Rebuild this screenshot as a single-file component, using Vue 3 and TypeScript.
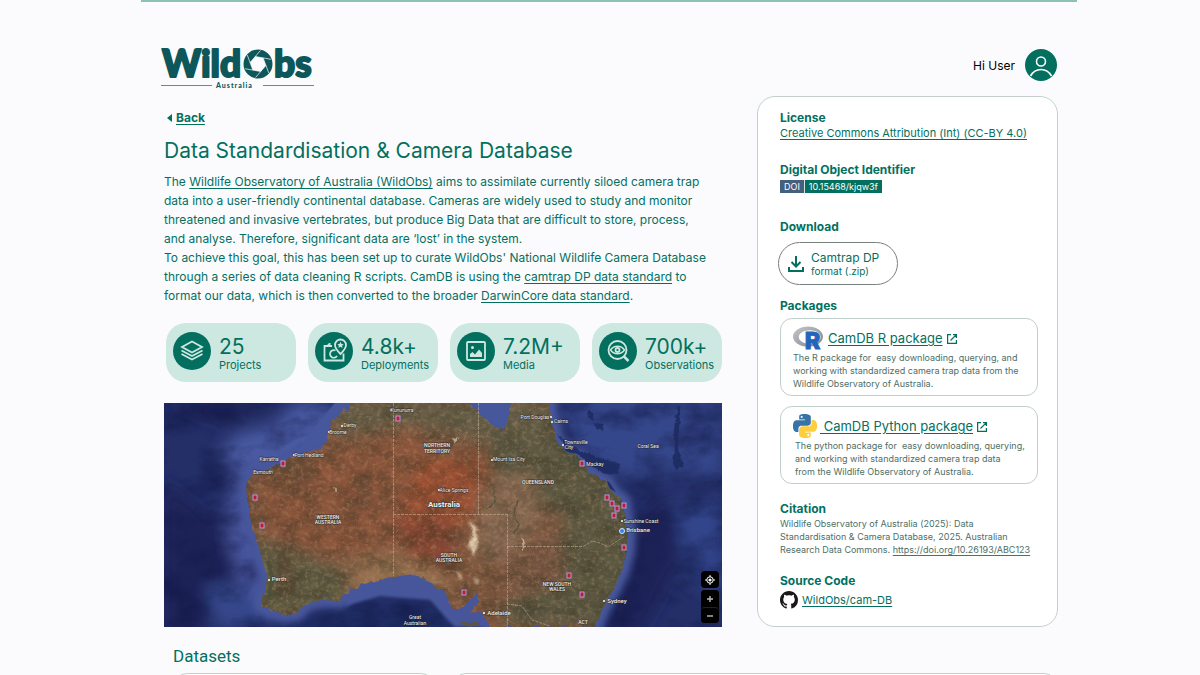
<script setup lang="ts">
interface Stat {
  icon: 'layers' | 'pin' | 'image' | 'search'
  value: string
  label: string
}

interface MapLabel {
  x: number
  y: number
  text: string
  kind: 'town' | 'city' | 'state' | 'country'
  dot?: [number, number]
}

const stats: Stat[] = [
  { icon: 'layers', value: '25', label: 'Projects' },
  { icon: 'pin', value: '4.8k+', label: 'Deployments' },
  { icon: 'image', value: '7.2M+', label: 'Media' },
  { icon: 'search', value: '700k+', label: 'Observations' },
]

const coast =
  'M352 403L348 412L343 408L340 415L332 420L330 432L327 441L320 449L307 452L295 455L283 462L270 468L261 472L255 470L250 478L246 487L247 500L250 513L252 527L258 543L262 560L267 575L266 590L261 597L262 605L270 611L285 615L297 613L307 603L323 600L340 601L350 590L367 583L387 578L413 574L427 580L437 587L447 595L453 611L462 609L470 601L477 591L478 602L470 613L482 612L490 627H595L600 613L607 600L613 590L622 570L627 550L628 533L625 517L623 502L613 493L607 483L597 477L587 470L580 458L567 452L557 442L553 427L549 412L549 403H511L507 424L503 429L495 427L490 422L473 408L468 403Z'

const sites: [number, number][] = [
  [398, 418], [283, 463], [255, 497], [262, 525], [582, 463], [607, 497], [612, 503],
  [617, 508], [624, 505], [614, 515], [624, 547], [569, 575], [464, 592], [582, 594],
]

const labels: MapLabel[] = [
  { x: 402, y: 412, text: 'Kununurra', kind: 'town', dot: [391, 410] },
  { x: 350, y: 427, text: 'Derby', kind: 'town', dot: [342, 426] },
  { x: 338, y: 434, text: 'Broome', kind: 'town', dot: [329, 432] },
  { x: 309, y: 457, text: 'Port Hedland', kind: 'town', dot: [294, 455] },
  { x: 269, y: 461, text: 'Karratha', kind: 'town' },
  { x: 263, y: 474, text: 'Exmouth', kind: 'town' },
  { x: 437, y: 447, text: 'NORTHERN', kind: 'state' },
  { x: 437, y: 453, text: 'TERRITORY', kind: 'state' },
  { x: 328, y: 519, text: 'WESTERN', kind: 'state' },
  { x: 328, y: 524, text: 'AUSTRALIA', kind: 'state' },
  { x: 454, y: 492, text: 'Alice Springs', kind: 'town', dot: [439, 490] },
  { x: 444, y: 507, text: 'Australia', kind: 'country' },
  { x: 538, y: 484, text: 'QUEENSLAND', kind: 'state' },
  { x: 449, y: 557, text: 'SOUTH', kind: 'state' },
  { x: 449, y: 562, text: 'AUSTRALIA', kind: 'state' },
  { x: 557, y: 586, text: 'NEW SOUTH', kind: 'state' },
  { x: 557, y: 591, text: 'WALES', kind: 'state' },
  { x: 583, y: 624, text: 'ACT', kind: 'state' },
  { x: 279, y: 581, text: 'Perth', kind: 'city', dot: [269, 580] },
  { x: 499, y: 615, text: 'Adelaide', kind: 'city', dot: [484, 613] },
  { x: 617, y: 603, text: 'Sydney', kind: 'city', dot: [604, 601] },
  { x: 638, y: 532, text: 'Brisbane', kind: 'city' },
  { x: 641, y: 523, text: 'Sunshine Coast', kind: 'town', dot: [622, 521] },
  { x: 535, y: 419, text: 'Port Douglas', kind: 'town', dot: [551, 417] },
  { x: 561, y: 423, text: 'Cairns', kind: 'town', dot: [552, 422] },
  { x: 576, y: 444, text: 'Townsville', kind: 'town', dot: [563, 445] },
  { x: 569, y: 449, text: 'City', kind: 'town' },
  { x: 595, y: 466, text: 'Mackay', kind: 'town' },
  { x: 509, y: 461, text: 'Mount Isa City', kind: 'town', dot: [492, 460] },
  { x: 648, y: 448, text: 'Coral Sea', kind: 'town' },
  { x: 415, y: 619, text: 'Great', kind: 'town' },
  { x: 415, y: 625, text: 'Australian', kind: 'town' },
]
</script>

<template>
  <div class="page">
    <header class="header">
      <svg class="logo" viewBox="0 0 153 41" role="img" aria-label="WildObs Australia">
        <text class="logo-word" x="1" y="29">Wild</text>
        <text class="logo-word" x="113" y="29">bs</text>
        <circle cx="97" cy="16" r="10.500" fill="none" stroke="#0d575a" stroke-width="8" />
        <path d="M104.900 17.400L99.700 23.500L91.900 22.100L89.100 14.600L94.300 8.500L102.100 9.900Z" fill="#fbfbfe" />
        <path
          d="M104.900 17.400L94.500 29.600M99.700 23.500L84.100 20.700M91.900 22.100L86.300 7.100M89.100 14.600L99.500 2.400M94.300 8.500L109.900 11.300M102.100 9.900L107.700 24.900"
          fill="none" stroke="#fbfbfe" stroke-width=".7"
        />
        <path d="M0 37.500H51M102 37.500H153" stroke="#5f8f85" />
        <text class="logo-sub" x="55" y="40">Australia</text>
      </svg>
      <div class="user">
        <span>Hi User</span>
        <button class="avatar" type="button" aria-label="Account">
          <svg viewBox="0 0 32 32">
            <circle cx="16" cy="16" r="16" fill="#03705f" />
            <g fill="none" stroke="#fff" stroke-width="1.600">
              <circle cx="16" cy="12.500" r="4.500" />
              <path d="M5.500 27C8 22.500 11.500 20.500 16 20.500S24 22.500 26.500 27" />
            </g>
          </svg>
        </button>
      </div>
    </header>

    <main class="main">
      <section class="intro">
        <a class="back" href="#">
          <svg viewBox="0 0 5 8"><path d="M5 0V8L0 4Z" fill="#03705f" /></svg>
          <span>Back</span>
        </a>
        <h1>Data Standardisation &amp; Camera Database</h1>
        <p class="about">
          The <a href="#">Wildlife Observatory of Australia (WildObs)</a> aims to assimilate currently siloed camera trap<br>
          data into a user-friendly continental database. Cameras are widely used to study and monitor<br>
          threatened and invasive vertebrates, but produce Big Data that are difficult to store, process,<br>
          and analyse. Therefore, significant data are ‘lost’ in the system.<br>
          To achieve this goal, this has been set up to curate WildObs' National Wildlife Camera Database<br>
          through a series of data cleaning R scripts. CamDB is using the <a href="#">camtrap DP data standard</a> to<br>
          format our data, which is then converted to the broader <a href="#">DarwinCore data standard</a>.
        </p>

        <ul class="stats">
          <li v-for="stat in stats" :key="stat.label" class="stat">
            <svg class="stat-icon" viewBox="0 0 38 38">
              <circle cx="19" cy="19" r="19" fill="#03705f" />
              <g fill="none" stroke="#cde8e0" stroke-width="1.800">
                <g v-if="stat.icon === 'layers'">
                  <path d="M19 9.500L29 15L19 20.500L9 15Z" />
                  <path d="M8.500 18.500L19 24L29.500 18.500M8.500 22L19 27.500L29.500 22" />
                </g>
                <g v-else-if="stat.icon === 'pin'">
                  <path d="M17 14H9.500V28.500H28.500V21.500" />
                  <path d="M13 14C13 12.500 14 11.800 15.500 12" />
                  <path d="M20.500 18.500A3.800 3.800 0 1 0 22 24" />
                  <path d="M25.500 22C22 18.500 20 16 20 13A5.500 5.500 0 0 1 31 13C31 16 29 18.500 25.500 22Z" />
                  <path d="M25.500 9.800L26.500 12L28.800 12.200L27.100 13.800L27.600 16L25.500 14.800L23.400 16L23.900 13.800L22.200 12.200L24.500 12Z" fill="#cde8e0" stroke="none" />
                </g>
                <g v-else-if="stat.icon === 'image'">
                  <rect x="10" y="10" width="18" height="18" rx="1" />
                  <path d="M13 25V22L15.500 20L18 22.500L22 17.500L25 21V25Z" fill="#cde8e0" stroke="none" />
                  <circle cx="15.500" cy="15.500" r="1.500" fill="#cde8e0" stroke="none" />
                </g>
                <g v-else>
                  <circle cx="18.500" cy="18" r="9" />
                  <path d="M24.500 24L29.500 29" stroke-width="2.500" />
                  <path d="M11.500 18C15 13 22 13 25.500 18C22 23 15 23 11.500 18Z" stroke-width="1.500" />
                  <circle cx="18.500" cy="18" r="2" />
                </g>
              </g>
            </svg>
            <div class="stat-text">
              <strong>{{ stat.value }}</strong>
              <span>{{ stat.label }}</span>
            </div>
          </li>
        </ul>

        <div class="map">
          <svg viewBox="164 403 558 224" preserveAspectRatio="xMidYMid slice" role="img" aria-label="Map of deployments in Australia">
            <defs>
              <clipPath id="land"><path :d="coast" /></clipPath>
              <filter id="soft" x="-30%" y="-30%" width="160%" height="160%"><feGaussianBlur stdDeviation="8" /></filter>
              <filter id="edge" x="-20%" y="-20%" width="140%" height="140%"><feGaussianBlur stdDeviation="3" /></filter>
              <filter id="salt" x="-30%" y="-30%" width="160%" height="160%"><feGaussianBlur stdDeviation="1.500" /></filter>
              <filter id="rough" x="-5%" y="-5%" width="110%" height="110%">
                <feTurbulence type="fractalNoise" baseFrequency="0.150" numOctaves="3" seed="3" />
                <feDisplacementMap in="SourceGraphic" scale="5" xChannelSelector="R" yChannelSelector="G" />
              </filter>
              <filter id="grain" x="0" y="0" width="100%" height="100%" color-interpolation-filters="sRGB">
                <feTurbulence type="fractalNoise" baseFrequency="0.050 0.070" numOctaves="6" seed="7" />
                <feColorMatrix values="0 0 0 0 0.200  0 0 0 0 0.190  0 0 0 0 0.120  1.800 0 0 0 -0.650" />
              </filter>
              <filter id="dust" x="0" y="0" width="100%" height="100%" color-interpolation-filters="sRGB">
                <feTurbulence type="fractalNoise" baseFrequency="0.220 0.260" numOctaves="4" seed="21" />
                <feColorMatrix values="0 0 0 0 0.760  0 0 0 0 0.600  0 0 0 0 0.460  0 2.200 0 0 -1" />
              </filter>
              <filter id="deep" x="0" y="0" width="100%" height="100%" color-interpolation-filters="sRGB">
                <feTurbulence type="fractalNoise" baseFrequency="0.025 0.040" numOctaves="6" seed="4" />
                <feColorMatrix values="0 0 0 0 0.060  0 0 0 0 0.080  0 0 0 0 0.250  2.400 0 0 0 -1" />
              </filter>
            </defs>

            <rect x="164" y="403" width="558" height="224" fill="#242f68" />
            <g filter="url(#soft)">
              <path d="M295 403H360L330 450L260 480L215 460L235 435L275 425Z" fill="#4a5aa2" />
              <path d="M235 470L262 460L262 530L275 620L235 600L225 520Z" fill="#46559c" />
              <path d="M560 395H722V480L680 470L650 480L625 475L570 450Z" fill="#35468b" />
              <path d="M672 500H722V600L690 580Z" fill="#33458a" />
              <path d="M164 480L225 530L245 600L260 627H164Z" fill="#1a2356" />
              <path d="M635 520L665 490L680 560L645 627H605Z" fill="#1b2457" />
              <path d="M164 403H285L225 425Z" fill="#1b2455" />
              <path d="M205 585H245L275 627H215Z" fill="#36468a" />
              <path d="M290 622L350 605L440 610L455 640H290Z" fill="#1f2a60" />
            </g>
            <rect x="164" y="403" width="558" height="224" filter="url(#deep)" opacity="0.500" />
            <path :d="coast" fill="#4a5b9e" stroke="#46579b" stroke-width="16" stroke-linejoin="round" filter="url(#edge)" />
            <path d="M350 590L413 575L448 595L480 600L490 627H455L430 600L380 596L345 606Z" fill="#46579b" filter="url(#salt)" />
            <path d="M468 400L490 422L504 429L511 400ZM352 403L330 420L327 441L295 455L308 435L335 403Z" fill="#46579b" />
            <g fill="#1d2b61" filter="url(#rough)" opacity="0.850">
              <path d="M557 433L570 446L584 452L600 458L620 464L618 475L606 474L591 466L580 456L566 451Z" />
              <path d="M587 410L593 413L594 422L588 418ZM594 423L604 424L602 430L596 428ZM607 479L616 492L608 488Z" />
              <path d="M677 404L681 408L678 440L680 456L683 466L676 471L673 462L675 447L674 430Z" />
            </g>

            <g filter="url(#rough)">
              <g clip-path="url(#land)">
                <path :d="coast" fill="#80573f" />
                <g filter="url(#soft)">
                  <path d="M260 478L330 450L420 430L440 500L420 545L330 555L265 530Z" fill="#8b543b" />
                  <path d="M325 400H470L545 400L560 450L470 437L400 425L340 437Z" fill="#68614a" />
                  <path d="M420 460L480 455L484 510L450 530L400 525Z" fill="#9c4f32" />
                  <path d="M480 430L560 440L600 475L640 500V627H500L520 560L570 520L500 480Z" fill="#5b5942" />
                  <path d="M478 490L530 470L545 520L505 560L478 560Z" fill="#8a6a52" />
                  <path d="M500 560L560 530L565 580L515 600Z" fill="#795642" />
                  <path d="M255 535L290 550L345 570L350 610L255 620Z" fill="#5f5b42" />
                  <path d="M350 560L430 548L450 590L350 595Z" fill="#95704f" />
                  <path d="M395 520L450 515L455 570L410 560Z" fill="#864532" />
                  <path d="M545 400L565 450L600 470L628 500L635 560L590 640H610L650 560L640 480Z" fill="#33452a" />
                </g>
                <path d="M270 465L307 453L320 475L290 500L268 490Z" fill="#5e4a35" opacity="0.500" filter="url(#edge)" />
                <path d="M353 480L370 477L374 505L356 510ZM275 550L293 560L300 590L278 600Z" fill="#5c4430" opacity="0.500" filter="url(#edge)" />
                <path d="M470 520L476 527L478 545L474 556L468 545L473 536ZM457 569L462 580L458 578ZM474 576L479 579L477 585Z" fill="#ead2b6" filter="url(#salt)" />
                <path d="M521 537L526 547L523 550ZM333 487L337 488L335 492ZM452 438L458 439L455 443Z" fill="#e6d4be" opacity="0.800" />
                <rect x="240" y="403" width="400" height="224" filter="url(#grain)" opacity="0.500" />
                <rect x="240" y="403" width="400" height="224" filter="url(#dust)" opacity="0.400" />
                <g fill="none" stroke="#4c5138" stroke-width="1.500" opacity="0.800">
                  <path d="M494 487L495 502L486 510M518 500L515 515L519 525L514 533" />
                  <path d="M268 560L272 575L269 600" stroke-width="4" />
                </g>
              </g>
              <path d="M461 624L468 621L480 622L478 626H465Z" fill="#5d553d" />
            </g>
            <g fill="none" stroke="#c6baa6" stroke-width="0.700" stroke-dasharray="3 1" opacity="0.750">
              <path d="M393.500 403V576M393 514.500H507M478.500 403V514M507.500 514V627M507 546.500H583L592 541L600 543L608 547L625 536" />
              <path d="M507 604L522 606L532 620L550 626" />
            </g>

            <g v-for="label in labels" :key="label.text + label.y">
              <circle v-if="label.dot" :cx="label.dot[0]" :cy="label.dot[1]" r="1" fill="#fff" />
              <text :x="label.x" :y="label.y" :class="['map-text', label.kind]">{{ label.text }}</text>
            </g>
            <rect
              v-for="site in sites" :key="site.join()" :x="site[0] - 2" :y="site[1] - 2"
              width="4" height="5" fill="#c01d2c" stroke="#b597e0" stroke-width="1"
            />
            <circle cx="622" cy="531" r="2.500" fill="#3b7df0" stroke="#dbe6fb" stroke-width="1" />
          </svg>
          <div class="map-controls">
            <button type="button" aria-label="Find my location">
              <svg viewBox="0 0 10 10">
                <circle cx="5" cy="5" r="3.200" fill="none" stroke="#fff" />
                <circle cx="5" cy="5" r="1.600" fill="#fff" />
                <path d="M5 0V2M5 8V10M0 5H2M8 5H10" stroke="#fff" />
              </svg>
            </button>
            <div class="zoom">
              <button type="button" aria-label="Zoom in">
                <svg viewBox="0 0 10 10"><path d="M5 2V8M2 5H8" stroke="#bbb" stroke-width="1.400" /></svg>
              </button>
              <button type="button" aria-label="Zoom out">
                <svg viewBox="0 0 10 10"><path d="M2 5H8" stroke="#bbb" stroke-width="1.400" /></svg>
              </button>
            </div>
          </div>
        </div>
      </section>

      <aside class="card">
        <section>
          <h2>License</h2>
          <a class="license" href="#">Creative Commons Attribution (Int) (CC-BY 4.0)</a>
        </section>
        <section class="doi-section">
          <h2>Digital Object Identifier</h2>
          <a class="doi" href="#"><span>DOI</span><span>10.15468/kjqw3f</span></a>
        </section>
        <section class="download-section">
          <h2>Download</h2>
          <button class="download" type="button">
            <svg viewBox="0 0 18 18" fill="none" stroke="#03705f" stroke-width="2">
              <path d="M9 1V11M4.500 7L9 11.500L13.500 7M2 12V16H16V12" />
            </svg>
            <span class="download-text"><span>Camtrap DP</span><small>format (.zip)</small></span>
          </button>
        </section>
        <section class="packages">
          <h2>Packages</h2>
          <article class="package">
            <div class="package-head">
              <svg class="r-logo" viewBox="0 0 32 26" aria-hidden="true">
                <defs>
                  <linearGradient id="ring" x1="0" y1="0" x2="1" y2="1">
                    <stop offset="0" stop-color="#c5c7cb" />
                    <stop offset="1" stop-color="#82848a" />
                  </linearGradient>
                </defs>
                <path d="M15.500 1C24 1 31 5.500 31 11.500S24 22 15.500 22S0 17.500 0 11.500S7 1 15.500 1ZM17.500 5C11 5 6 8 6 12S11 19 17.500 19S28.500 16 28.500 12S24 5 17.500 5Z" fill="url(#ring)" fill-rule="evenodd" />
                <text class="r-letter" x="12" y="24">R</text>
              </svg>
              <a href="#">CamDB R package</a>
              <svg class="external" viewBox="0 0 10 10" fill="none" stroke="#03705f" stroke-width="1.200">
                <path d="M4 .6H.6V9.400H9.400V6M6 .6H9.400V4M9.400 .6L3.500 6.500" />
              </svg>
            </div>
            <p>The R package for&nbsp; easy downloading, querying, and<br>working with standardized camera trap data from the<br>Wildlife Observatory of Australia.</p>
          </article>
          <article class="package python">
            <div class="package-head">
              <svg class="py-logo" viewBox="0 0 24 24" aria-hidden="true">
                <path fill="#3773a5" d="M14.250.18l.9.2.73.26.59.3.45.32.34.34.25.34.16.33.1.3.04.26.02.2-.01.13V8.500l-.05.63-.13.55-.21.46-.26.38-.3.31-.33.25-.35.19-.35.14-.33.1-.3.07-.26.04-.21.02H8.770l-.69.05-.59.14-.5.22-.41.27-.33.32-.27.35-.2.36-.15.37-.1.35-.07.32-.04.27-.02.21v3.060H3.170l-.21-.03-.28-.07-.32-.12-.35-.18-.36-.26-.36-.36-.35-.46-.32-.59-.28-.73-.21-.88-.14-1.050-.05-1.230.06-1.220.16-1.040.24-.87.32-.71.36-.57.4-.44.42-.33.42-.24.4-.16.36-.1.32-.05.24-.01h.16l.06.01h8.160v-.83H6.180l-.01-2.750-.02-.37.05-.34.11-.31.17-.28.25-.26.31-.23.38-.2.44-.18.51-.15.58-.12.64-.1.71-.06.77-.04.84-.02 1.270.05zm-6.300 1.980l-.23.33-.08.41.08.41.23.34.33.22.41.09.41-.09.33-.22.23-.34.08-.41-.08-.41-.23-.33-.33-.22-.41-.09-.41.09z" />
                <path fill="#fdce3f" d="M21.040 6.110l.28.06.32.12.35.18.36.27.36.35.35.47.32.59.28.73.21.88.14 1.040.05 1.230-.06 1.230-.16 1.040-.24.86-.32.71-.36.57-.4.45-.42.33-.42.24-.4.16-.36.09-.32.05-.24.02-.16-.01h-8.220v.82h5.840l.01 2.760.02.36-.05.34-.11.31-.17.29-.25.25-.31.24-.38.2-.44.17-.51.15-.58.13-.64.09-.71.07-.77.04-.84.01-1.270-.04-1.070-.14-.9-.2-.73-.25-.59-.3-.45-.33-.34-.34-.25-.34-.16-.33-.1-.3-.04-.25-.02-.2.01-.13v-5.340l.05-.64.13-.54.21-.46.26-.38.3-.32.33-.24.35-.2.35-.14.33-.1.3-.06.26-.04.21-.02.13-.01h5.840l.69-.05.59-.14.5-.21.41-.28.33-.32.27-.35.2-.36.15-.36.1-.35.07-.32.04-.28.02-.21V6.070h2.090l.14.01zm-6.470 14.250l-.23.33-.08.41.08.41.23.33.33.23.41.08.41-.08.33-.23.23-.33.08-.41-.08-.41-.23-.33-.33-.23-.41-.08-.41.08z" />
              </svg>
              <a href="#">&nbsp;CamDB Python package</a>
              <svg class="external" viewBox="0 0 10 10" fill="none" stroke="#03705f" stroke-width="1.200">
                <path d="M4 .6H.6V9.400H9.400V6M6 .6H9.400V4M9.400 .6L3.500 6.500" />
              </svg>
            </div>
            <p>The python package for&nbsp; easy downloading, querying,<br>and working with standardized camera trap data<br>from the Wildlife Observatory of Australia.</p>
          </article>
        </section>
        <section class="citation">
          <h2>Citation</h2>
          <p>Wildlife Observatory of Australia (2025): Data<br>Standardisation &amp; Camera Database, 2025. Australian<br>Research Data Commons. <a href="#">https://doi.org/10.26193/ABC123</a></p>
        </section>
        <section class="source">
          <h2>Source Code</h2>
          <div class="repo">
            <svg viewBox="0 0 16 16" aria-hidden="true">
              <path fill="#191717" d="M8 0C3.580 0 0 3.580 0 8c0 3.540 2.290 6.530 5.470 7.590.4.07.55-.17.55-.38 0-.19-.01-.82-.01-1.490-2.010.37-2.530-.49-2.690-.94-.09-.23-.48-.94-.82-1.130-.28-.15-.68-.52-.01-.53.63-.01 1.080.58 1.230.82.72 1.210 1.870.87 2.330.66.07-.52.28-.87.51-1.070-1.780-.2-3.640-.89-3.640-3.950 0-.87.31-1.590.82-2.150-.08-.2-.36-1.020.08-2.120 0 0 .67-.21 2.200.82.64-.18 1.320-.27 2-.27s1.360.09 2 .27c1.530-1.040 2.200-.82 2.200-.82.44 1.100.16 1.920.08 2.120.51.56.82 1.270.82 2.150 0 3.070-1.870 3.750-3.650 3.950.29.25.54.73.54 1.480 0 1.070-.01 1.930-.01 2.200 0 .21.15.46.55.38A8.010 8.010 0 0 0 16 8c0-4.420-3.580-8-8-8z" />
            </svg>
            <a href="#">WildObs/cam-DB</a>
          </div>
        </section>
      </aside>
    </main>

    <section class="datasets">
      <h2>Datasets</h2>
      <div class="panels">
        <div class="panel"></div>
        <div class="panel"></div>
      </div>
    </section>
  </div>
</template>

<style>
body {
  margin: 0;
  background: #fbfbfe;
}
</style>

<style scoped>
.page {
  box-sizing: border-box;
  height: 100vh;
  overflow: hidden;
  padding: 0 123px 0 141px;
  color: #03705f;
  font-family: Inter, "Open Sans", sans-serif;
  font-size: 12px;
}
.page * {
  box-sizing: border-box;
}
h1, h2, p, ul {
  margin: 0;
  padding: 0;
}
svg {
  display: block;
}
a {
  color: inherit;
  text-underline-offset: 2px;
}
button {
  margin: 0;
  padding: 0;
  border: 0;
  color: inherit;
  font: inherit;
  cursor: pointer;
}
.header {
  display: flex;
  justify-content: space-between;
  align-items: flex-start;
  padding: 46px 20px 7px;
  border-top: 2px solid #8fc0b6;
}
.logo {
  width: 153px;
  height: 41px;
  overflow: visible;
}
.logo-word {
  fill: #0d575a;
  stroke: #0d575a;
  stroke-width: 2px;
  stroke-linejoin: round;
  font-family: Lato, sans-serif;
  font-size: 37px;
  font-weight: 900;
}
.logo-sub {
  fill: #0d575a;
  font-family: Lato, sans-serif;
  font-size: 7px;
  font-weight: 900;
  letter-spacing: 1px;
}
.user {
  display: flex;
  align-items: center;
  gap: 10px;
  padding-top: 1px;
  color: #000;
}
.avatar {
  width: 32px;
  height: 32px;
  border-radius: 50%;
  background: none;
}
.main {
  display: grid;
  grid-template-columns: minmax(0, 1fr) 301px;
  gap: 35px;
  padding: 0 19px 0 23px;
}
.intro {
  padding-top: 14px;
}
.back {
  display: flex;
  align-items: center;
  gap: 4px;
  width: max-content;
  padding-left: 3px;
  font-weight: 700;
  line-height: 16px;
  text-decoration: none;
}
.back svg {
  width: 5px;
  height: 8px;
}
.back span {
  text-decoration: underline;
}
h1 {
  margin-top: 10px;
  font-size: 21px;
  font-weight: 400;
  line-height: 30px;
}
.about {
  margin-top: 6px;
  line-height: 19px;
  white-space: nowrap;
}
.stats {
  display: grid;
  grid-template-columns: repeat(4, minmax(0, 1fr));
  gap: 12px;
  margin-top: 18px;
  padding-left: 2px;
  list-style: none;
}
.stat {
  display: flex;
  gap: 8px;
  padding: 9px 7px 10px;
  border-radius: 20px;
  background: #cde8e0;
}
.stat-icon {
  flex: none;
  width: 38px;
  height: 38px;
}
.stat-text {
  display: flex;
  flex-direction: column;
  padding-top: 3px;
  white-space: nowrap;
}
.stat-text strong {
  font-size: 21px;
  font-weight: 400;
  line-height: 24px;
}
.stat-text span {
  font-size: 11px;
  line-height: 13px;
}
.map {
  position: relative;
  margin-top: 21px;
}
.map > svg {
  width: 100%;
  aspect-ratio: 558 / 224;
}
.map-text {
  fill: #f0f0f0;
  stroke: #222;
  stroke-width: 1px;
  stroke-opacity: 0.7;
  paint-order: stroke;
  font-family: Roboto, sans-serif;
  font-size: 5px;
  text-anchor: middle;
}
.map-text.state {
  font-weight: 500;
}
.map-text.city {
  font-size: 6px;
  font-weight: 500;
}
.map-text.country {
  font-size: 8px;
  font-weight: 700;
}
.map-controls {
  position: absolute;
  right: 3px;
  bottom: 4px;
  display: grid;
  gap: 2px;
}
.map-controls button {
  display: grid;
  place-items: center;
  width: 18px;
  height: 17px;
  border-radius: 4px;
  background: #000;
}
.map-controls svg {
  width: 10px;
  height: 10px;
}
.zoom {
  border-radius: 4px;
  background: #000;
}
.zoom button + button {
  height: 16px;
  border-top: 1px solid #222;
}
.card {
  padding: 13px 19px 16px 22px;
  border: 1px solid #c3d0cc;
  border-radius: 18px;
  background: #fff;
  white-space: nowrap;
}
.card h2 {
  font-size: 12px;
  font-weight: 700;
  line-height: 15px;
}
.license {
  display: block;
  font-size: 11px;
  line-height: 17px;
}
.doi-section {
  margin-top: 20px;
}
.doi {
  display: flex;
  width: max-content;
  margin-top: 3px;
  color: #fff;
  font-size: 9px;
  line-height: 13px;
  text-decoration: none;
}
.doi span {
  padding: 0 4px;
  background: #03705f;
}
.doi span:first-child {
  border-right: 1px solid #d5e2e4;
  background: #45607c;
}
.download-section {
  margin-top: 26px;
}
.download {
  display: flex;
  align-items: center;
  gap: 6px;
  min-width: 120px;
  height: 43px;
  margin: 8px 0 0 -2px;
  padding: 0 8px;
  border: 1px solid #77817e;
  border-radius: 22px;
  background: #fff;
  text-align: left;
}
.download svg {
  width: 18px;
  height: 18px;
}
.download-text {
  display: flex;
  flex-direction: column;
  line-height: 15px;
}
.download-text small {
  font-size: 10px;
  line-height: 13px;
}
.packages {
  margin-top: 13px;
}
.package {
  margin-top: 5px;
  padding: 6px 8px 5px 12px;
  border: 1px solid #bfcfca;
  border-radius: 12px;
}
.package + .package {
  margin-top: 10px;
}
.package-head {
  display: flex;
  align-items: center;
  height: 26px;
  font-size: 13px;
}
.r-logo {
  width: 31px;
  height: 26px;
  margin-right: 4px;
  overflow: visible;
}
.r-letter {
  fill: #2265b9;
  stroke: #2265b9;
  stroke-width: 1px;
  font-family: Roboto, sans-serif;
  font-size: 25px;
  font-weight: 900;
}
.py-logo {
  width: 24px;
  height: 24px;
  margin-right: 3px;
}
.external {
  width: 10px;
  height: 10px;
  margin: 2px 0 0 4px;
}
.package p,
.citation p {
  color: #4e6f67;
  font-size: 9px;
  line-height: 13px;
}
.package.python p {
  padding-left: 2px;
}
.citation {
  margin-top: 17px;
}
.citation p {
  margin-top: 1px;
}
.source {
  margin-top: 17px;
}
.repo {
  display: flex;
  align-items: center;
  gap: 4px;
  margin-top: 3px;
  font-size: 11px;
  line-height: 18px;
}
.repo svg {
  width: 18px;
  height: 18px;
}
.datasets {
  margin-top: 18px;
  padding: 0 19px 0 32px;
}
.datasets h2 {
  font-family: Roboto, sans-serif;
  font-size: 17px;
  font-weight: 400;
  line-height: 22px;
}
.panels {
  display: grid;
  grid-template-columns: 262px minmax(0, 1fr);
  gap: 17px;
  margin-top: 6px;
}
.panel {
  min-height: 120px;
  border: 1px solid #c3d0cc;
  border-radius: 14px;
  background: #fff;
}
</style>
